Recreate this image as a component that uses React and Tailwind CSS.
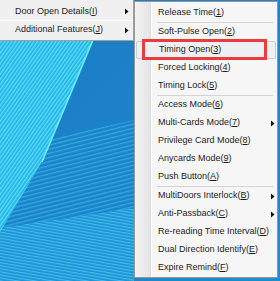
import React from 'react';

const Arrow = () => (
  <svg width="4" height="7" viewBox="0 0 4 7" className="shrink-0">
    <polygon points="0,0.5 3.5,3.5 0,6.5" fill="#111" />
  </svg>
);

const Label = ({ text, k }) => (
  <span>
    {text}(<u className="underline-offset-1">{k}</u>)
  </span>
);

const items = [
  { text: 'Release Time', k: '1' },
  'sep',
  { text: 'Soft-Pulse Open', k: '2' },
  { text: 'Timing Open', k: '3', active: true },
  { text: 'Forced Locking', k: '4' },
  { text: 'Timing Lock', k: '5' },
  'sep',
  { text: 'Access Mode', k: '6' },
  { text: 'Multi-Cards Mode', k: '7', sub: true },
  { text: 'Privilege Card Mode', k: '8' },
  { text: 'Anycards Mode', k: '9' },
  { text: 'Push Button', k: 'A' },
  'sep',
  { text: 'MultiDoors Interlock', k: 'B', sub: true },
  { text: 'Anti-Passback', k: 'C', sub: true },
  { text: 'Re-reading Time Interval', k: 'D' },
  { text: 'Dual Direction Identify', k: 'E' },
  { text: 'Expire Remind', k: 'F' },
];

const Wallpaper = () => (
  <svg className="absolute inset-0" width="280" height="281" viewBox="0 0 280 281">
    <defs>
      <linearGradient id="base" x1="0" y1="0" x2="1" y2="1">
        <stop offset="0" stopColor="#1a7bc3" />
        <stop offset="1" stopColor="#1f8bd0" />
      </linearGradient>
      <pattern id="diag" width="3" height="3" patternUnits="userSpaceOnUse" patternTransform="rotate(-55)">
        <rect width="3" height="3" fill="#22b2ea" />
        <rect width="3" height="1.3" fill="#5ce0f9" />
      </pattern>
      <pattern id="hz" width="4" height="4" patternUnits="userSpaceOnUse" patternTransform="rotate(-14)">
        <rect width="4" height="4" fill="#1b82c8" />
        <rect width="4" height="1.4" fill="#2fa8e2" />
      </pattern>
      <pattern id="hz2" width="3" height="3" patternUnits="userSpaceOnUse" patternTransform="rotate(10)">
        <rect width="3" height="3" fill="#1d90d3" />
        <rect width="3" height="1.3" fill="#40bdee" />
      </pattern>
    </defs>
    <rect width="280" height="281" fill="url(#base)" />
    <polygon points="0,150 134,120 134,281 0,281" fill="url(#hz)" />
    <polygon points="0,228 134,208 134,281 0,281" fill="url(#hz2)" />
    <polygon points="0,40 93,40 43,160 0,232" fill="url(#diag)" />
    <line x1="93" y1="40" x2="42" y2="162" stroke="#6ff3ff" strokeWidth="1.5" />
  </svg>
);

export default function App() {
  return (
    <div
      className="relative w-[280px] h-[281px] overflow-hidden text-[9px] text-[#1b1b1b]"
      style={{ fontFamily: '"Liberation Sans", Arial, sans-serif' }}
    >
      <Wallpaper />

      <div className="absolute left-0 top-0 w-[134px] h-[41px] pt-[3px] border-r border-b border-[#a0a0a0] bg-[#f0f0f0]">
        <div className="h-[18px] flex items-center justify-between pl-[15px] pr-[4px] border-b border-white">
          <Label text="Door Open Details" k="I" />
          <Arrow />
        </div>
        <div className="h-[18px] flex items-center justify-between pl-[15px] pr-[4px]">
          <Label text="Additional Features" k="J" />
          <Arrow />
        </div>
      </div>

      <div className="absolute left-[134px] top-[1px] w-[144px] pt-[2px] border border-[#979797] bg-[linear-gradient(to_right,#f3f3f3_0px,#e5e5e5_15px,#dddddd_15px,#dddddd_16px,#ffffff_16px,#ffffff_17px,#f6f6f6_17px)]">
        {items.map((it, i) =>
          it === 'sep' ? (
            <div key={i} className="h-px ml-[22px] mr-[4px] bg-[#d4d4d4]" />
          ) : (
            <div key={i} className="relative h-[18px] px-px">
              <div
                className={`h-full flex items-center justify-between pl-[22px] pr-[1px] ${
                  it.active ? 'bg-[#edf1f4] border border-[#c9cfd3] rounded-[2px] pl-[21px]' : ''
                }`}
              >
                <Label text={it.text} k={it.k} />
                {it.sub && <Arrow />}
              </div>
              {it.active && (
                <div className="absolute left-[7px] top-[-2px] w-[125px] h-[21px] border-[3px] border-[#ec3a3d]" />
              )}
            </div>
          )
        )}
      </div>
    </div>
  );
}
